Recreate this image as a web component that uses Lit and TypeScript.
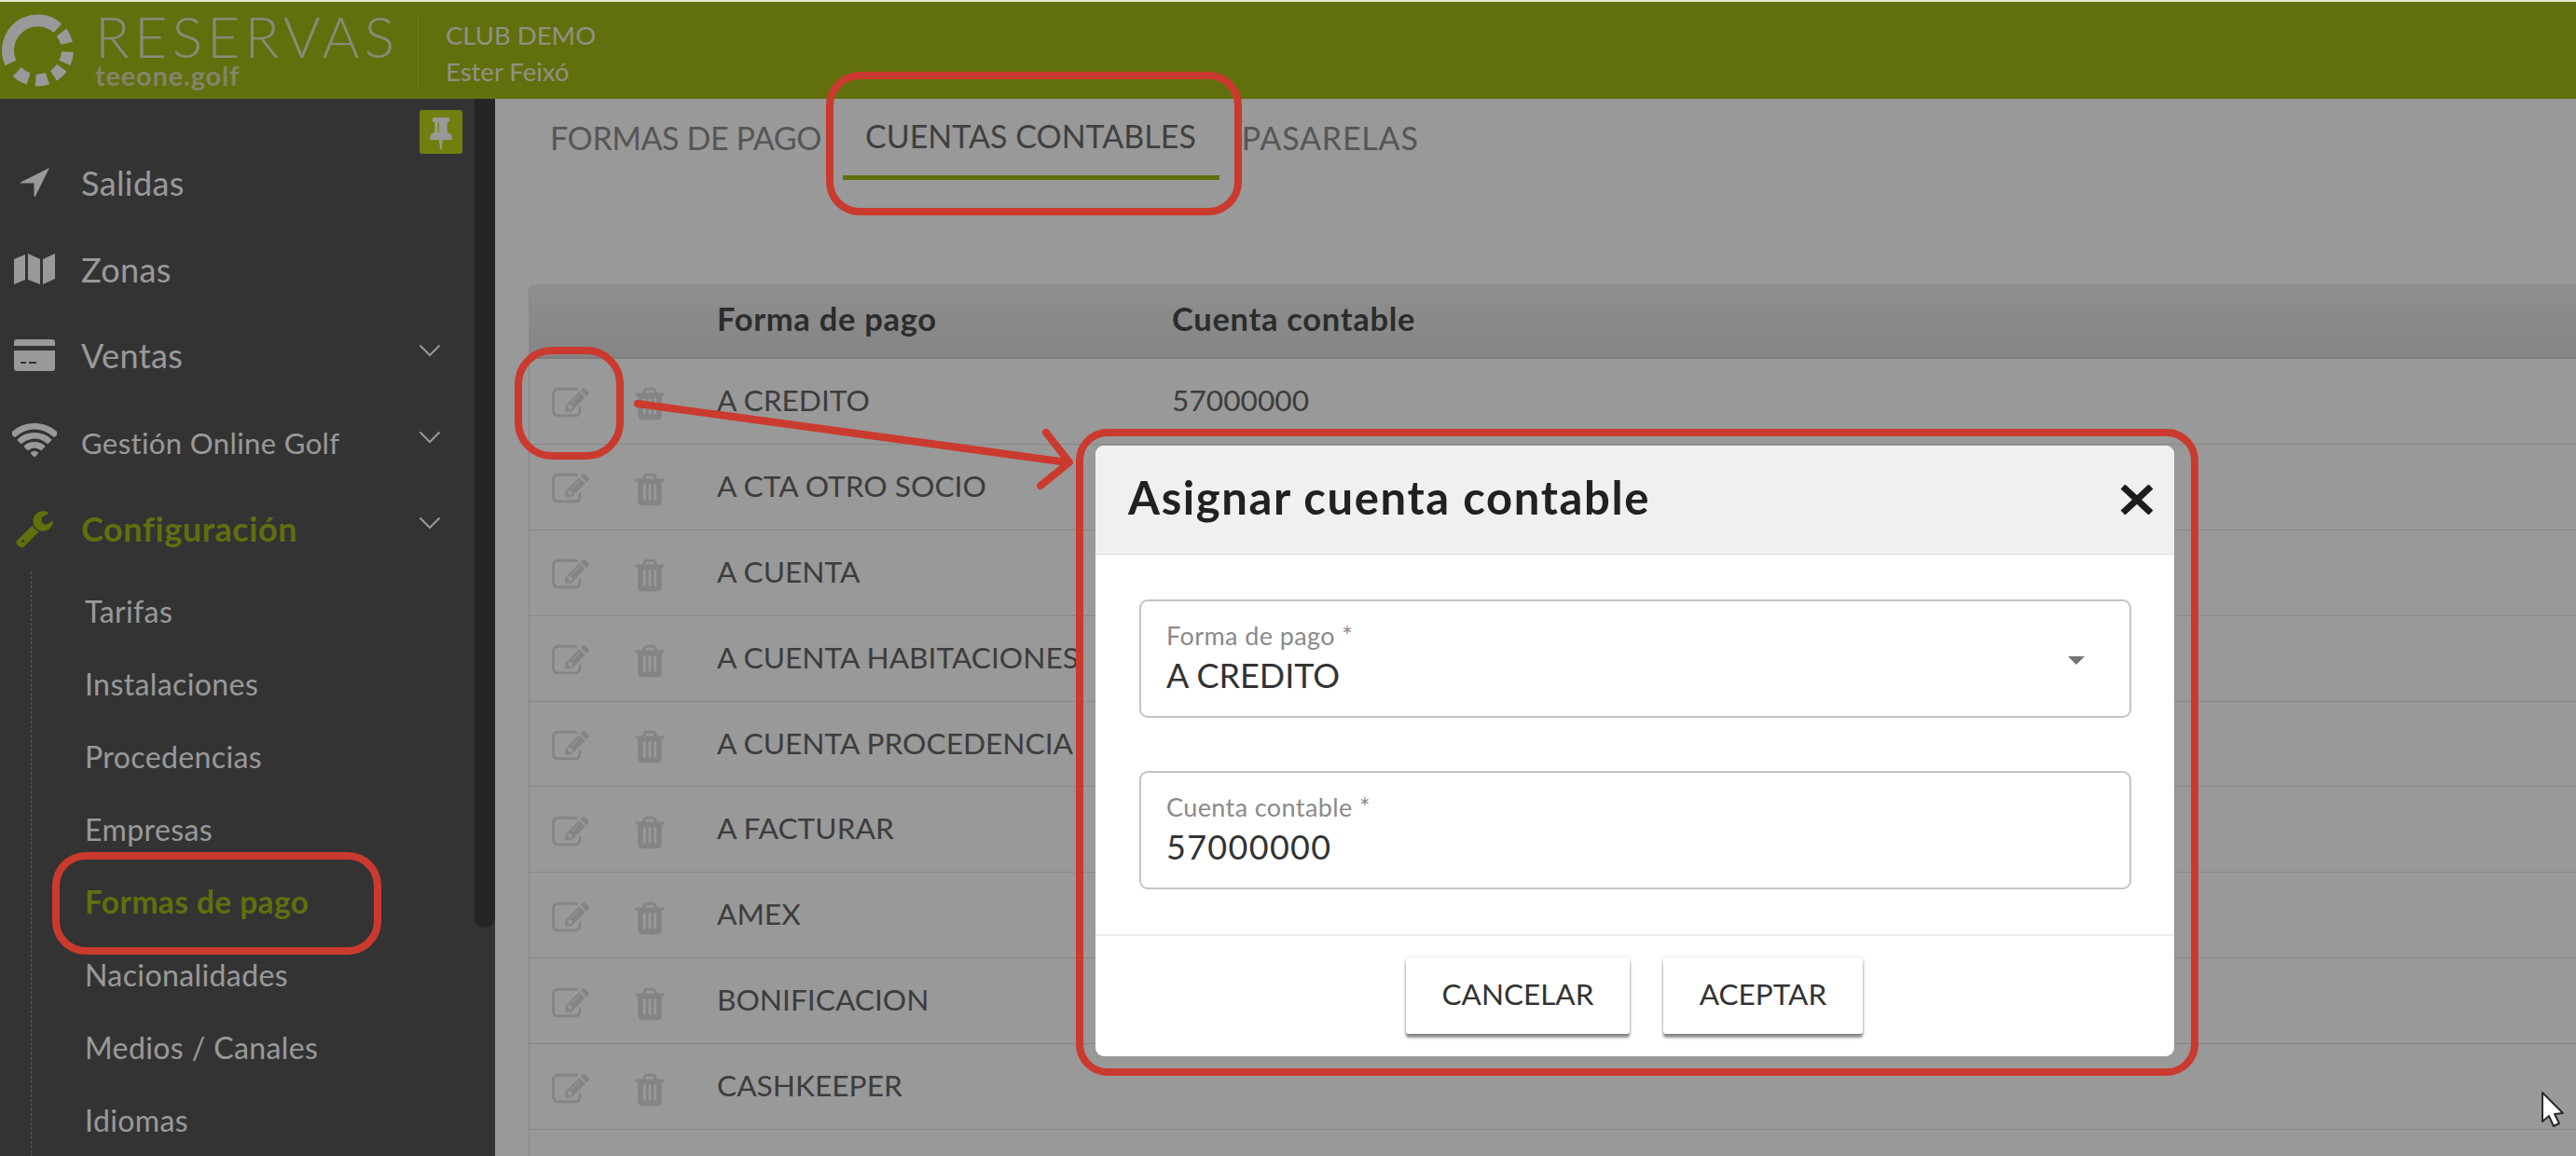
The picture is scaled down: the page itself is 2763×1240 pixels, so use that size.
import { LitElement, html, css, svg } from "lit";
import { customElement } from "lit/decorators.js";

const EDIT = "M888 1184l116-116-152-152-116 116v56h96v96h56zm440-720q-16-16-33 1l-350 350q-17 17-1 33t33-1l350-350q17-17 1-33zm80 594v190q0 119-84.5 203.5t-203.5 84.5h-832q-119 0-203.5-84.5t-84.5-203.5v-832q0-119 84.5-203.5t203.5-84.5h832q63 0 117 25 15 7 18 23 3 17-9 29l-49 49q-14 14-32 8-23-6-45-6h-832q-66 0-113 47t-47 113v832q0 66 47 113t113 47h832q66 0 113-47t47-113v-126q0-13 9-22l64-64q15-15 35-7t20 29zm-96-738l288 288-672 672h-288v-288zm444 132l-92 92-288-288 92-92q28-28 68-28t68 28l152 152q28 28 28 68t-28 68z";
const TRASH = "M704 1376v-704q0-14-9-23t-23-9h-64q-14 0-23 9t-9 23v704q0 14 9 23t23 9h64q14 0 23-9t9-23zm256 0v-704q0-14-9-23t-23-9h-64q-14 0-23 9t-9 23v704q0 14 9 23t23 9h64q14 0 23-9t9-23zm256 0v-704q0-14-9-23t-23-9h-64q-14 0-23 9t-9 23v704q0 14 9 23t23 9h64q14 0 23-9t9-23zm-544-992h448l-48-117q-7-9-17-11h-317q-10 2-17 11zm928 32v64q0 14-9 23t-23 9h-96v948q0 83-47 143.5t-113 60.5h-832q-66 0-113-62.5t-47-145.5v-944h-96q-14 0-23-9t-9-23v-64q0-14 9-23t23-9h309l70-167q15-37 54-63t79-26h320q40 0 79 26t54 63l70 167h309q14 0 23 9t9 23z";
const PIN = "M480 864v-448q0-14-9-23t-23-9-23 9-9 23v448q0 14 9 23t23 9 23-9 9-23zm672 352q0 26-19 45t-45 19h-429l-51 483q-2 12-10.5 20.5t-20.5 8.5h-1q-27 0-32-27l-76-485h-404q-26 0-45-19t-19-45q0-123 78.5-221.5t177.5-98.5v-512q-52 0-90-38t-38-90 38-90 90-38h640q52 0 90 38t38 90-38 90-90 38v512q99 0 177.5 98.5t78.5 221.5z";
const WRENCH = "M384 1472q0-26-19-45t-45-19-45 19-19 45 19 45 45 19 45-19 19-45zm644-420l-682 682q-37 37-90 37-52 0-91-37l-106-108q-38-36-38-90 0-53 38-91l681-681q39 98 114.5 173.5t173.5 114.5zm634-435q0 39-23 106-47 134-164.5 217.5t-258.5 83.5q-185 0-316.5-131.5t-131.5-316.5 131.5-316.5 316.5-131.5q58 0 121.5 16.5t107.5 46.5q16 11 16 28t-16 28l-293 169v224l193 107q5-3 79-48.5t135.5-81 70.5-35.5q15 0 23.5 10t8.5 25z";
const WIFI = "M1024 1523q-20 0-93-73.5t-73-93.5q0-32 62.5-54t103.5-22 103.5 22 62.5 54q0 20-73 93.5t-93 73.5zm270-271q-2 0-40-25t-101.5-50-128.5-25-128.5 25-101 50-40.5 25q-18 0-93.5-75t-75.5-93q0-13 10-23 78-77 196-121t233-44 233 44 196 121q10 10 10 23 0 18-75.5 93t-93.5 75zm273-272q-11 0-23-8-136-105-252-154.5t-268-49.5q-85 0-170.5 22t-149 53-113.5 62-79 53-31 22q-17 0-92-75t-75-93q0-12 10-22 132-132 320-205t380-73 380 73 320 205q10 10 10 22 0 18-75 93t-92 75zm271-271q-11 0-22-9-179-157-371.5-236.5t-420.5-79.5-420.5 79.5-371.5 236.5q-11 9-22 9-17 0-92.5-75t-75.5-93q0-13 10-23 187-186 445-288t527-102 527 102 445 288q10 10 10 23 0 18-75.5 93t-92.5 75z";

const ROWS: [string, string][] = [
  ["A CREDITO", "57000000"],
  ["A CTA OTRO SOCIO", ""],
  ["A CUENTA", ""],
  ["A CUENTA HABITACIONES", ""],
  ["A CUENTA PROCEDENCIA", ""],
  ["A FACTURAR", ""],
  ["AMEX", ""],
  ["BONIFICACION", ""],
  ["CASHKEEPER", ""],
  ["", ""],
];

const SUB = ["Tarifas", "Instalaciones", "Procedencias", "Empresas", "Formas de pago", "Nacionalidades", "Medios / Canales", "Idiomas"];

function arc(cx: number, cy: number, r: number, a0: number, a1: number): string {
  const p = (a: number) => {
    const t = (a * Math.PI) / 180;
    return `${(cx + r * Math.cos(t)).toFixed(2)} ${(cy + r * Math.sin(t)).toFixed(2)}`;
  };
  return `M${p(a0)}A${r} ${r} 0 ${a1 - a0 > 180 ? 1 : 0} 1 ${p(a1)}`;
}

@customElement("app-root")
export class AppRoot extends LitElement {
  static styles = css`
    :host {
      display: block;
      position: relative;
      width: 100%;
      height: 1240px;
      overflow: hidden;
      background: #e6e9cf;
      padding-top: 2px;
      box-sizing: border-box;
      font-family: Lato, "Liberation Sans", sans-serif;
    }
    .header {
      height: 104px;
      background: #a4b917;
      display: flex;
      align-items: stretch;
      color: #fff;
    }
    .logo { width: 82px; height: 104px; flex: none; }
    .brand {
      width: 346px;
      margin-left: 20px;
      flex: none;
      display: flex;
      flex-direction: column;
    }
    .brand-name {
      font-size: 61px;
      font-weight: 300;
      line-height: 60px;
      margin-top: 7px;
      letter-spacing: 5px;
      color: #e4e8c8;
    }
    .brand-sub {
      font-size: 29px;
      font-weight: 700;
      line-height: 24px;
      color: #d9deb0;
      letter-spacing: 0.8px;
    }
    .club {
      margin: 15px 0 9px 0;
      border-left: 1px solid #b8ca48;
      padding-left: 29px;
      display: flex;
      flex-direction: column;
      justify-content: center;
      gap: 13px;
      font-size: 27.5px;
      line-height: 26px;
      color: #f0f2dd;
      font-weight: 400;
    }
    .layout { display: flex; height: 1134px; background: #fff; }
    .sidebar {
      width: 531px;
      flex: none;
      position: relative;
      background: #555;
      padding-top: 44px;
      box-sizing: border-box;
      color: #fff;
    }
    .pin {
      position: absolute;
      left: 450px;
      top: 12px;
      width: 46px;
      height: 47px;
      border-radius: 3px;
      background: #bdd41b;
      display: flex;
      align-items: center;
      justify-content: center;
    }
    .pin svg { width: 24px; height: 38px; fill: #fff; }
    .scroll {
      position: absolute;
      left: 509px;
      top: 0;
      width: 22px;
      height: 889px;
      background: #3e3e3e;
      border-radius: 0 0 10px 10px;
    }
    .item {
      height: 92.6px;
      display: flex;
      align-items: center;
      position: relative;
      font-size: 36px;
      letter-spacing: 0.4px;
    }
    .item .ic {
      width: 87px;
      flex: none;
      display: flex;
      justify-content: center;
      padding-right: 14px;
      box-sizing: border-box;
    }
    .item .ic svg { fill: #fff; display: block; }
    .item .small { font-size: 31px; padding-top: 2px; }
    .item .chev {
      position: absolute;
      left: 449px;
      top: 34px;
      width: 24px;
      height: 14px;
      fill: none;
      stroke: #fff;
      stroke-width: 2;
    }
    .item.on { color: #a4b917; font-weight: 700; letter-spacing: 0.6px; }
    .item.on .ic svg { fill: #a4b917; }
    .subs {
      margin-left: 33px;
      border-left: 1px dashed #9a9a9a;
      padding: 4px 0 0 57px;
      font-size: 32px;
      letter-spacing: 0.4px;
      height: 700px;
    }
    .sub { height: 77.9px; display: flex; align-items: center; }
    .sub.on { color: #a4b917; font-weight: 700; font-size: 33.5px; }
    .main { flex: 1; min-width: 0; }
    .tabs {
      display: flex;
      height: 87px;
      margin-left: 35px;
      font-size: 34px;
      color: #8f8f8f;
    }
    .tab {
      padding: 0 21px 0 24px;
      height: 82px;
      display: flex;
      align-items: center;
    }
    .tab.first { letter-spacing: -0.4px; padding-right: 23px; }
    .tab.last { letter-spacing: 0.8px; }
    .tab.on {
      color: #6c6c6c;
      border-bottom: 5px solid #a4b917;
      padding-right: 25px;
      align-items: flex-start;
      height: 82px;
    }
    .tab.on span { margin-top: 19px; }
    .table {
      margin: 112px 0 0 36px;
      border-left: 1px solid #e2e2e2;
      border-radius: 6px 0 0 0;
      overflow: hidden;
      color: #666;
      font-size: 31.7px;
    }
    .row {
      display: grid;
      grid-template-columns: 87px 84px 518px 1fr;
      height: 91.9px;
      box-sizing: border-box;
      align-items: center;
      border-bottom: 1px solid #e2e2e2;
    }
    .row > div { padding-bottom: 3px; }
    .row.head {
      height: 80px;
      background: linear-gradient(#eeeeee, #dedede);
      border-bottom: 2px solid #cfcfcf;
      color: #4a4a4a;
      font-weight: 700;
      font-size: 34.5px;
      letter-spacing: 0.7px;
    }
    .row.head > div { padding-bottom: 5px; }
    .name { padding-left: 30px; white-space: nowrap; }
    .act { display: flex; justify-content: center; padding-bottom: 0 !important; margin-top: 6px; }
    .act svg { width: 40px; height: 40px; fill: #dcdcdc; display: block; }
    .backdrop {
      position: absolute;
      inset: 2px 0 0 0;
      background: rgba(0, 0, 0, 0.4);
    }
    .modal {
      position: absolute;
      left: 1175px;
      top: 478px;
      width: 1157px;
      height: 655px;
      background: #fff;
      border-radius: 9px;
      overflow: hidden;
      display: flex;
      flex-direction: column;
      color: #212121;
    }
    .m-head {
      height: 117px;
      flex: none;
      box-sizing: border-box;
      background: #f0f0f0;
      border-bottom: 1px solid #dcdcdc;
      display: flex;
      align-items: center;
      justify-content: space-between;
      padding: 0 22px 6px 35px;
    }
    .m-title { font-size: 49px; font-weight: 700; letter-spacing: 1.6px; }
    .m-head svg { width: 36px; height: 32px; stroke: #1c1c1c; stroke-width: 7; display: block; margin-top: 6px; }
    .m-body {
      flex: 1;
      padding: 48px 46px 0 47px;
      display: flex;
      flex-direction: column;
      gap: 57px;
    }
    .field {
      height: 127px;
      box-sizing: border-box;
      border: 2px solid #c4c4c4;
      border-radius: 9px;
      padding: 22px 29px 0 27px;
      position: relative;
    }
    .f-label { font-size: 27px; line-height: 30px; color: #8a8a8a; letter-spacing: 0.4px; }
    .f-value { font-size: 36px; line-height: 42px; margin-top: 6px; color: #333; }
    .f-value.num { letter-spacing: 1.3px; }
    .caret {
      position: absolute;
      right: 48px;
      top: 59px;
      width: 0;
      height: 0;
      border-left: 9px solid transparent;
      border-right: 9px solid transparent;
      border-top: 9px solid #757575;
    }
    .m-foot {
      height: 131px;
      flex: none;
      box-sizing: border-box;
      border-top: 2px solid #ececec;
      display: flex;
      justify-content: flex-start;
      padding: 23px 0 0 333px;
      gap: 36px;
    }
    .btn {
      height: 82px;
      box-sizing: border-box;
      background: #fff;
      display: flex;
      align-items: center;
      justify-content: center;
      border-radius: 3px;
      font-size: 31.5px;
      color: #333;
      padding-bottom: 5px;
      box-shadow: 0 4px 3px rgba(0,0,0,.45), 0 0 4px rgba(0,0,0,.15);
    }
    .btn.cancel { width: 240px; }
    .btn.ok { width: 214px; }
    .marks { position: absolute; left: 0; top: 0; width: 2763px; height: 1240px; pointer-events: none; }
  `;

  private edit() {
    return html`<svg viewBox="0 0 1792 1792"><path d=${EDIT}></path></svg>`;
  }
  private trash() {
    return html`<svg viewBox="0 0 1792 1792"><path d=${TRASH}></path></svg>`;
  }
  private chev() {
    return html`<svg class="chev" viewBox="0 0 24 14"><path d="M1.5 1.5 12 12 22.5 1.5"></path></svg>`;
  }

  render() {
    const segs: [number, number][] = [[-37, -14], [3, 25], [36, 58], [71, 94], [108, 134]];
    return html`
      <div class="header">
        <svg class="logo" viewBox="0 0 82 104">
          <g fill="none" stroke="#fff" stroke-width="13">
            <path d=${arc(40.5, 52, 32, 155, 312)}></path>
            ${segs.map((s) => svg`<path d=${arc(40.5, 52, 32, s[0], s[1])}></path>`)}
          </g>
        </svg>
        <div class="brand">
          <div class="brand-name">RESERVAS</div>
          <div class="brand-sub">teeone.golf</div>
        </div>
        <div class="club"><div>CLUB DEMO</div><div>Ester Feixó</div></div>
      </div>
      <div class="layout">
        <aside class="sidebar">
          <div class="scroll"></div>
          <div class="pin"><svg viewBox="0 0 1152 1792"><path d=${PIN}></path></svg></div>
          <div class="item">
            <div class="ic"><svg width="32" height="32" viewBox="0 0 32 32"><path d="M31 0.5 1 15.5 Q0 16.5 1.5 16.5 L15.5 16.5 V30.5 Q16 32 17 30.5 L31.5 1 Q32 0 31 0.5Z"></path></svg></div>
            <span>Salidas</span>
          </div>
          <div class="item">
            <div class="ic"><svg width="44" height="34" viewBox="0 0 44 34"><path d="M0 6 12 1V28L0 33ZM15 0 28 6V33L15 28ZM31 6 44 0V27L31 33Z"></path></svg></div>
            <span>Zonas</span>
          </div>
          <div class="item">
            <div class="ic"><svg width="44" height="34" viewBox="0 0 44 34"><path d="M3 0H41Q44 0 44 3V7H0V3Q0 0 3 0ZM0 12H44V31Q44 34 41 34H3Q0 34 0 31ZM7 24V26H13V24ZM16 24V26H24V24Z" fill-rule="evenodd"></path></svg></div>
            <span>Ventas</span>
            ${this.chev()}
          </div>
          <div class="item">
            <div class="ic"><svg width="48" height="40" viewBox="100 200 1848 1400"><path d=${WIFI}></path></svg></div>
            <span class="small">Gestión Online Golf</span>
            ${this.chev()}
          </div>
          <div class="item on">
            <div class="ic"><svg width="40" height="40" viewBox="0 80 1664 1664"><path d=${WRENCH}></path></svg></div>
            <span>Configuración</span>
            ${this.chev()}
          </div>
          <div class="subs">
            ${SUB.map((s) => html`<div class="sub ${s === "Formas de pago" ? "on" : ""}">${s}</div>`)}
          </div>
        </aside>
        <main class="main">
          <div class="tabs">
            <div class="tab first">FORMAS DE PAGO</div>
            <div class="tab on"><span>CUENTAS CONTABLES</span></div>
            <div class="tab last">PASARELAS</div>
          </div>
          <div class="table">
            <div class="row head">
              <div></div><div></div>
              <div class="name">Forma de pago</div>
              <div>Cuenta contable</div>
            </div>
            ${ROWS.map(
              (r) => html`<div class="row">
                <div class="act">${this.edit()}</div>
                <div class="act">${this.trash()}</div>
                <div class="name">${r[0]}</div>
                <div>${r[1]}</div>
              </div>`
            )}
          </div>
        </main>
      </div>
      <div class="backdrop"></div>
      <section class="modal">
        <div class="m-head">
          <div class="m-title">Asignar cuenta contable</div>
          <svg viewBox="0 0 36 32"><path d="M3 2 33 30M33 2 3 30"></path></svg>
        </div>
        <div class="m-body">
          <div class="field">
            <div class="f-label">Forma de pago *</div>
            <div class="f-value">A CREDITO</div>
            <div class="caret"></div>
          </div>
          <div class="field">
            <div class="f-label">Cuenta contable *</div>
            <div class="f-value num">57000000</div>
          </div>
        </div>
        <div class="m-foot">
          <div class="btn cancel">CANCELAR</div>
          <div class="btn ok">ACEPTAR</div>
        </div>
      </section>
      <svg class="marks" viewBox="0 0 2763 1240">
        <g fill="none" stroke="#cb3a2e" stroke-width="8" stroke-linecap="round" stroke-linejoin="round">
          <rect x="890" y="81" width="438" height="146" rx="32"></rect>
          <rect x="556" y="376" width="109" height="113" rx="36"></rect>
          <rect x="60" y="918" width="345" height="102" rx="32"></rect>
          <rect x="1158" y="464" width="1196" height="686" rx="30"></rect>
          <path d="M684 433 1145 496M1122 464 1147 496 1116 521"></path>
        </g>
        <path d="M2727 1172 V1203 L2734 1197 L2739 1208 L2745 1205 L2740 1195 L2749 1194 Z" fill="#fff" stroke="#2a2a2a" stroke-width="2" stroke-linejoin="round"></path>
      </svg>
    `;
  }
}
